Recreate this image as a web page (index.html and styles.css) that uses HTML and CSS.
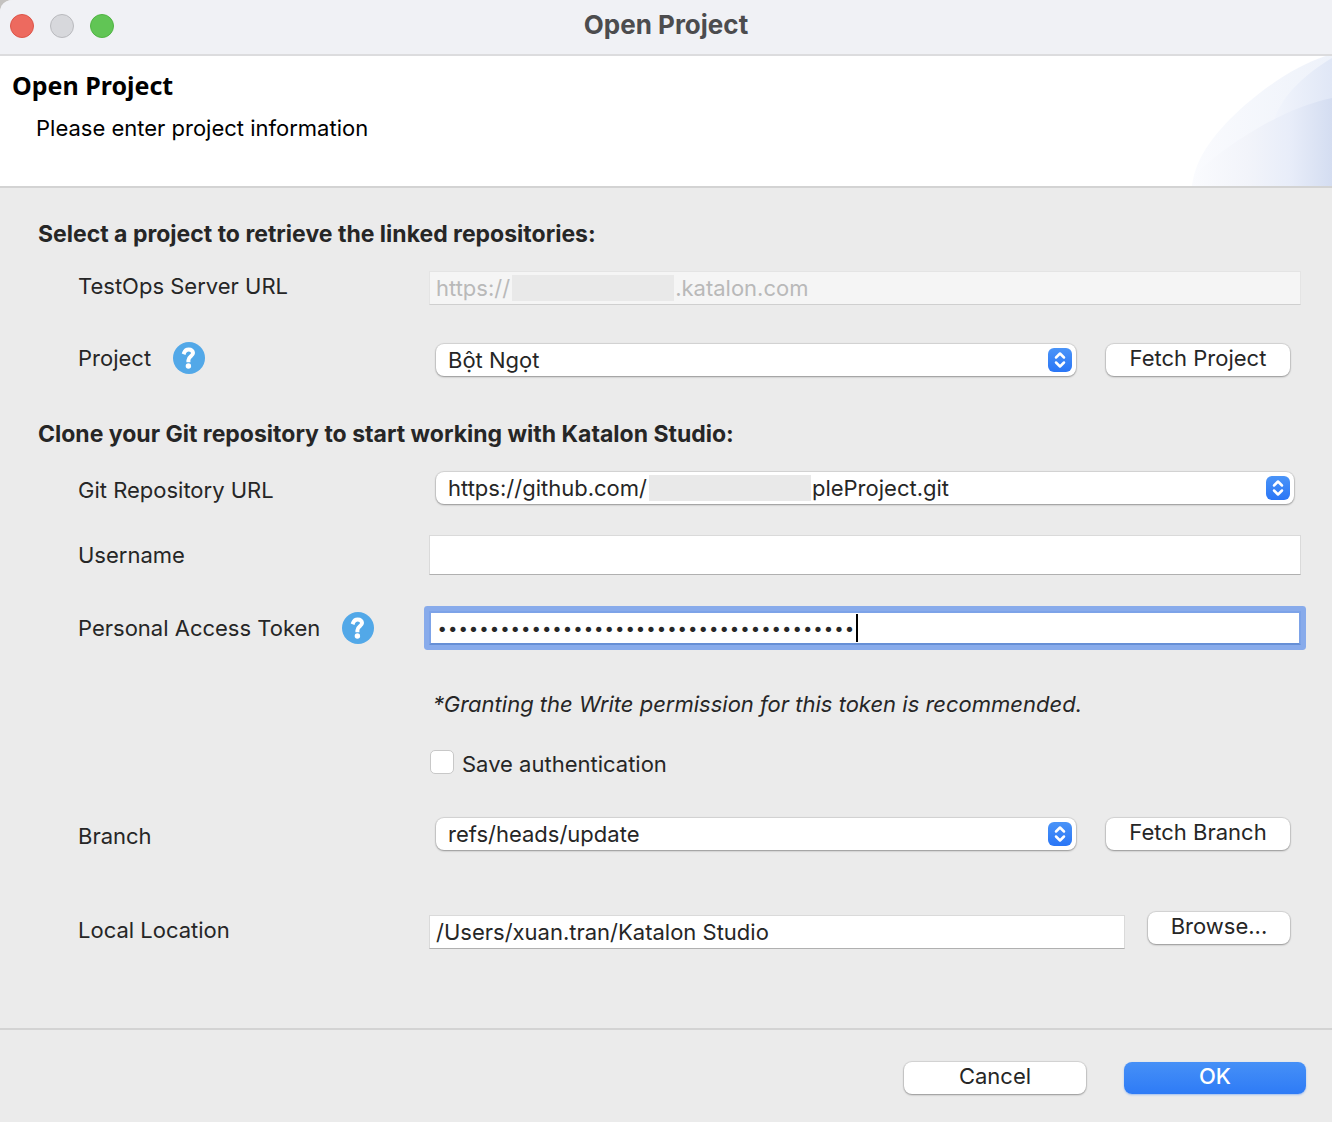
FILE: index.html
```html
<!DOCTYPE html>
<html lang="en">
<head>
<meta charset="utf-8">
<title>Open Project</title>
<link rel="stylesheet" href="styles.css">
</head>
<body>
<div class="window">
  <header class="titlebar">
    <div class="lights">
      <button class="light light-close" type="button" aria-label="Close"></button>
      <button class="light light-min" type="button" aria-label="Minimize" disabled></button>
      <button class="light light-zoom" type="button" aria-label="Zoom"></button>
    </div>
    <div class="window-title">Open Project</div>
  </header>

  <section class="banner">
    <div class="banner-text">
      <h1 class="banner-title">Open Project</h1>
      <p class="banner-sub">Please enter project information</p>
    </div>
    <svg class="banner-art" viewBox="0 0 140 130" aria-hidden="true">
      <defs>
        <linearGradient id="outer" gradientUnits="userSpaceOnUse" x1="0" y1="0" x2="140" y2="0">
          <stop offset="0" stop-color="#fafbfe"/><stop offset="1" stop-color="#eef2fa"/>
        </linearGradient>
        <linearGradient id="upper" gradientUnits="userSpaceOnUse" x1="80" y1="0" x2="140" y2="0">
          <stop offset="0" stop-color="#f2f5fc"/><stop offset="1" stop-color="#e0e7f6"/>
        </linearGradient>
        <linearGradient id="lower" gradientUnits="userSpaceOnUse" x1="0" y1="0" x2="140" y2="0">
          <stop offset="0" stop-color="#fafbfe"/><stop offset=".4" stop-color="#f2f4fa"/><stop offset=".7" stop-color="#e8edf9"/><stop offset="1" stop-color="#d4ddf1"/>
        </linearGradient>
      </defs>
      <path fill="url(#outer)" d="M0 130C3 100 26 73 53 49C82 24 112 6 140 -2V130Z"/>
      <path fill="url(#upper)" d="M83 61C92 38 113 18 140 2V130H83Z"/>
      <path fill="url(#lower)" d="M0 130C2 121 6 115 13 109C50 79 96 51 140 42V130Z"/>
    </svg>
  </section>

  <form class="form">
    <h2 class="section-title">Select a project to retrieve the linked repositories:</h2>

    <div class="row row-server label-up">
      <label class="label" for="server">TestOps Server URL</label>
      <div class="control">
        <div class="field">
          <input class="text" id="server" type="text" value="https://&emsp;&emsp;&emsp;&emsp;&emsp;&emsp;&emsp;&ensp;.katalon.com" disabled>
          <span class="redacted redacted-server"></span>
        </div>
      </div>
    </div>

    <div class="row row-project label-up">
      <div class="label">
        <label for="project">Project</label>
        <button class="help" type="button" aria-label="Help for Project">
          <svg viewBox="0 0 32 32" aria-hidden="true"><circle cx="16" cy="16" r="16"/><path class="hook" d="M11.3 10.4C12.2 8 14 7.4 15.7 7.4C18.300 7.400 20 8.900 20 11C20 14.200 15.400 14.400 15.400 18.200"/><circle class="dot" cx="15.400" cy="24" r="2.700"/></svg>
        </button>
      </div>
      <div class="control">
        <div class="popup">
          <select class="select" id="project"><option>Bột Ngọt</option></select>
          <svg class="arrows" viewBox="0 0 24 24" aria-hidden="true"><path d="M8 9.500L12 5.500L16 9.500M8 14.500L12 18.500L16 14.500"/></svg>
        </div>
        <button class="btn btn-fetch" type="button">Fetch Project</button>
      </div>
    </div>

    <h2 class="section-title">Clone your Git repository to start working with Katalon Studio:</h2>

    <div class="row row-git label-down">
      <label class="label" for="git">Git Repository URL</label>
      <div class="control">
        <div class="popup popup-wide">
          <select class="select" id="git"><option>https://github.com/&emsp;&emsp;&emsp;&emsp;&emsp;&emsp;&emsp;&ensp;pleProject.git</option></select>
          <span class="redacted redacted-git"></span>
          <svg class="arrows" viewBox="0 0 24 24" aria-hidden="true"><path d="M8 9.500L12 5.500L16 9.500M8 14.500L12 18.500L16 14.500"/></svg>
        </div>
      </div>
    </div>

    <div class="row row-user">
      <label class="label" for="username">Username</label>
      <div class="control">
        <div class="field"><input class="text text-tall" id="username" type="text"></div>
      </div>
    </div>

    <div class="row row-token">
      <div class="label">
        <label for="token">Personal Access Token</label>
        <button class="help" type="button" aria-label="Help for Personal Access Token">
          <svg viewBox="0 0 32 32" aria-hidden="true"><circle cx="16" cy="16" r="16"/><path class="hook" d="M11.3 10.4C12.2 8 14 7.4 15.7 7.4C18.300 7.400 20 8.900 20 11C20 14.200 15.400 14.400 15.400 18.200"/><circle class="dot" cx="15.400" cy="24" r="2.700"/></svg>
        </button>
      </div>
      <div class="control">
        <div class="field">
          <input class="text text-focus" id="token" type="password" value="0123456789012345678901234567890123456789">
          <span class="caret"></span>
        </div>
      </div>
    </div>

    <div class="row row-note">
      <p class="note">*Granting the Write permission for this token is recommended.</p>
    </div>

    <div class="row row-save">
      <input class="check" id="save" type="checkbox">
      <label class="check-label" for="save">Save authentication</label>
    </div>

    <div class="row row-branch label-down">
      <label class="label" for="branch">Branch</label>
      <div class="control">
        <div class="popup">
          <select class="select" id="branch"><option>refs/heads/update</option></select>
          <svg class="arrows" viewBox="0 0 24 24" aria-hidden="true"><path d="M8 9.500L12 5.500L16 9.500M8 14.500L12 18.500L16 14.500"/></svg>
        </div>
        <button class="btn btn-fetch" type="button">Fetch Branch</button>
      </div>
    </div>

    <div class="row row-location label-up">
      <label class="label" for="location">Local Location</label>
      <div class="control">
        <div class="field"><input class="text" id="location" type="text" value="/Users/xuan.tran/Katalon Studio"></div>
        <button class="btn btn-browse" type="button">Browse...</button>
      </div>
    </div>
  </form>

  <footer class="footer">
    <button class="btn btn-action" type="button">Cancel</button>
    <button class="btn btn-action btn-primary" type="button">OK</button>
  </footer>
</div>
</body>
</html>
```
FILE: styles.css
```css
* { box-sizing: border-box; }

body {
  margin: 0;
  background: #c4c2c0;
  color: #262626;
  font-family: Inter, "Liberation Sans", sans-serif;
  font-size: 22px;
  line-height: 28px;
}

button, input, select { font: inherit; color: inherit; margin: 0; }

.window {
  min-height: 100vh;
  display: flex;
  flex-direction: column;
  background: #ebebeb;
  border-top-left-radius: 12px;
  overflow: hidden;
}

/* Title bar */
.titlebar {
  height: 56px;
  display: grid;
  grid-template-columns: 1fr auto 1fr;
  align-items: center;
  padding: 0 10px 2px;
  background: #f0f1f5;
  border-bottom: 2px solid #dcdcde;
}
.lights { display: flex; gap: 16px; }
.light { width: 24px; height: 24px; padding: 0; border: 1px solid; border-radius: 50%; }
.light-close { background: #ed6a5f; border-color: #dd5549; }
.light-min { background: #d7d8dc; border-color: #b9babe; }
.light-zoom { background: #61c555; border-color: #50b443; }
.window-title { padding-bottom: 2px; font-size: 26px; font-weight: 700; color: #4c4c4e; }

/* Banner */
.banner {
  height: 132px;
  display: flex;
  justify-content: space-between;
  background: #fff;
  border-bottom: 2px solid #d3d3d3;
}
.banner-text { padding: 13px 12px; color: #000; }
.banner-title {
  margin: 0;
  font-family: "Noto Sans", "Open Sans", sans-serif;
  font-size: 25px;
  font-weight: 700;
  line-height: 32px;
}
.banner-sub { margin: 13px 0 0 24px; }
.banner-art { width: 140px; height: 130px; }

/* Form */
.form { flex: 1; padding: 30px 31px 0 38px; }
.section-title { margin: 0 0 18px; font-size: 23px; font-weight: 700; line-height: 32px; }
.row { display: flex; align-items: center; height: 40px; padding-left: 40px; }
.label { flex: none; display: flex; align-items: center; gap: 22px; width: 351px; }
.label-up .label { padding-bottom: 4px; }
.label-down .label { padding-top: 4px; }
.control { flex: 1; display: flex; align-items: center; min-width: 0; }

.row-server { margin-bottom: 32px; }
.row-project { margin-bottom: 38px; }
.row-git { margin-bottom: 27px; }
.row-user { margin-bottom: 33px; }
.row-token { margin-bottom: 36px; }
.row-note { margin-bottom: 18px; padding-left: 395px; }
.row-save { margin-bottom: 32px; padding-left: 392px; gap: 8px; }
.row-branch { margin-bottom: 58px; }
.row-location { margin-bottom: 76px; }

.help { width: 32px; height: 32px; padding: 0; border: 0; background: none; }
.help svg { display: block; fill: #52a8e8; }
.help .hook { fill: none; stroke: #fff; stroke-width: 4; stroke-linecap: square; }
.help .dot { fill: #fff; }

/* Text fields */
.field { position: relative; flex: 1; min-width: 0; }
.text {
  display: block;
  width: 100%;
  height: 34px;
  padding: 0 6px;
  border: 1px solid #dadada;
  border-bottom-color: #b0b0b0;
  border-radius: 0;
  background: #fff;
  outline: 0;
}
.text:disabled { background: #f5f5f5; border-color: #e4e4e4; border-bottom-color: #cfcfcf; color: #b9b9b9; }
.text-tall { height: 40px; }
.text-focus {
  border: 2px solid #7da3e8;
  border-bottom-color: #668fd6;
  border-radius: 1px;
  box-shadow: 0 0 0 5px #88abeb;
  font-family: Lato, sans-serif;
  font-size: 18px;
  font-weight: 300;
}
.caret { position: absolute; left: 427px; top: 3px; width: 2px; height: 28px; background: #000; }

.redacted { position: absolute; top: 4px; width: 162px; height: 26px; background: #e9e9e9; }
.redacted-server { left: 83px; }
.redacted-git { left: 213px; top: 3px; }

/* Pop-up menus */
.popup { position: relative; flex: 1; height: 32px; margin-left: 7px; min-width: 0; }
.popup-wide { margin-right: 7px; }
.select {
  display: block;
  appearance: none;
  width: 100%;
  height: 32px;
  padding: 0 40px 0 12px;
  border: 0;
  border-radius: 8px;
  background: #fff;
  box-shadow: 0 0 1px 1px #0000001a, 0 1px 2px #0000004d;
}
.arrows {
  position: absolute;
  top: 4px;
  right: 4px;
  width: 24px;
  height: 24px;
  border-radius: 6px;
  background: linear-gradient(#4a94f8, #2a76f6);
  fill: none;
  stroke: #fff;
  stroke-width: 2.5;
  stroke-linecap: round;
  stroke-linejoin: round;
  pointer-events: none;
}

/* Buttons */
.btn {
  flex: none;
  height: 32px;
  padding: 0 0 4px;
  border: 0;
  border-radius: 8px;
  background: #fff;
  line-height: 28px;
  box-shadow: 0 0 1px 1px #0000001a, 0 1px 2px #0000004d;
}
.btn-fetch { width: 184px; margin: 0 11px 0 30px; }
.btn-browse { width: 142px; margin: 0 11px 8px 23px; }
.btn-action { width: 182px; }
.btn-primary {
  background: linear-gradient(#4690f7, #2e7bf6);
  color: #fff;
  font-weight: 500;
  box-shadow: 0 1px 2px #2e7bf666;
}

.note { margin: 0; font-style: italic; }
.check {
  appearance: none;
  width: 24px;
  height: 24px;
  border: 1px solid #c8c8c8;
  border-radius: 5px;
  background: #fff;
}
.check-label { padding-top: 4px; }

.footer {
  display: flex;
  justify-content: flex-end;
  gap: 38px;
  padding: 32px 26px 28px;
  border-top: 2px solid #d3d3d3;
}
```
